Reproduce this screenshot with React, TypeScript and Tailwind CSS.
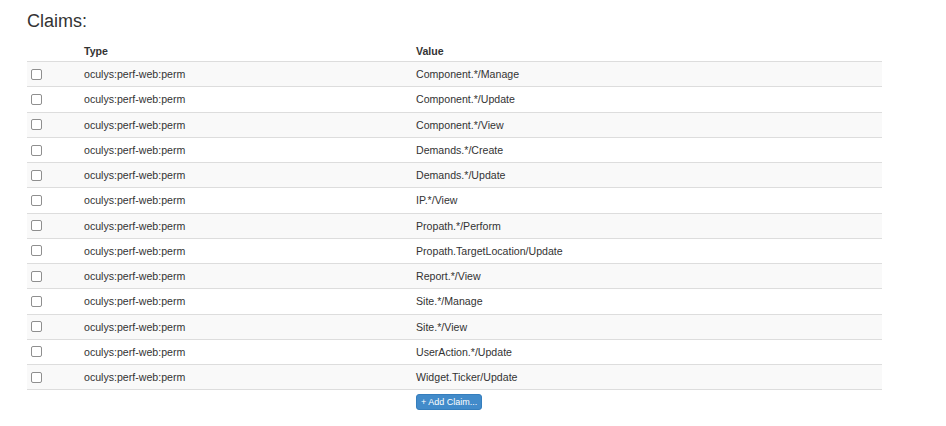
import React from "react";

const values = [
  "Component.*/Manage",
  "Component.*/Update",
  "Component.*/View",
  "Demands.*/Create",
  "Demands.*/Update",
  "IP.*/View",
  "Propath.*/Perform",
  "Propath.TargetLocation/Update",
  "Report.*/View",
  "Site.*/Manage",
  "Site.*/View",
  "UserAction.*/Update",
  "Widget.Ticker/Update",
];

export default function App() {
  return (
    <div
      className="w-[946px] h-[426px] bg-white text-[#333] pl-[27px] pr-[64px]"
      style={{ fontFamily: '"Liberation Sans", Arial, sans-serif' }}
    >
      <h3 className="text-[18px] leading-[20px] pt-[11px] pb-[6px]">Claims:</h3>
      <table className="w-[855px] border-collapse text-[10.6px]">
        <colgroup>
          <col className="w-[53px]" />
          <col className="w-[332px]" />
          <col />
        </colgroup>
        <thead>
          <tr>
            <th className="px-1 pt-[6px] pb-[2px] leading-[16.23px] text-left font-bold"></th>
            <th className="px-1 pt-[6px] pb-[2px] leading-[16.23px] text-left font-bold">Type</th>
            <th className="px-1 pt-[6px] pb-[2px] leading-[16.23px] text-left font-bold">Value</th>
          </tr>
        </thead>
        <tbody>
          {values.map((v, i) => (
            <tr
              key={v}
              className={
                i % 2 === 0
                  ? "bg-[#f9f9f9] border-t border-[#dddddd]"
                  : "bg-white border-t border-[#dddddd]"
              }
            >
              <td className="px-1 py-1 leading-[16.23px] align-middle">
                <span className="block w-[11px] h-[11px] border border-[#8f8f8f] rounded-[2px] bg-white" />
              </td>
              <td className="px-1 py-1 leading-[16.23px]">oculys:perf-web:perm</td>
              <td className="px-1 py-1 leading-[16.23px]">{v}</td>
            </tr>
          ))}
        </tbody>
        <tfoot>
          <tr className="border-t border-[#dddddd]">
            <td className="px-1 pt-1"></td>
            <td className="px-1 pt-1"></td>
            <td className="px-1 pt-[4px]">
              <button className="h-[16px] px-[4px] rounded-[3px] bg-[#428bca] border border-[#357ebd] text-white text-[9px] leading-[14px]">
                + Add Claim...
              </button>
            </td>
          </tr>
        </tfoot>
      </table>
    </div>
  );
}
